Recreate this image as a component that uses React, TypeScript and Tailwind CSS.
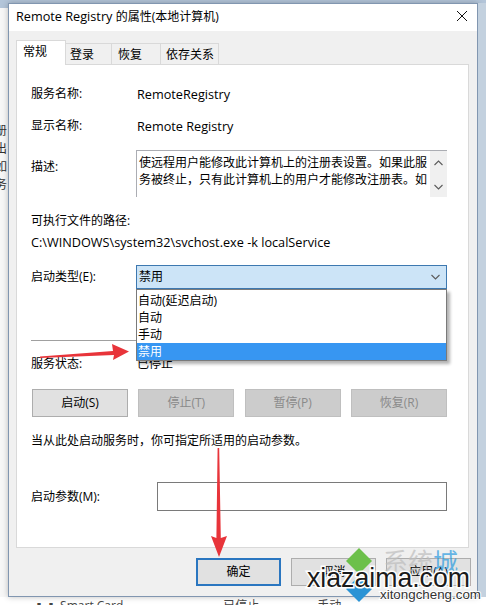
import React from "react";

const font = "font-['Open_Sans','Noto_Sans_CJK_SC',sans-serif]";

const Label = ({ children, w = "w-[105px]" }: { children: React.ReactNode; w?: string }) => (
  <div className={`${w} shrink-0 leading-[16px]`}>{children}</div>
);

const Chevron = ({ up = false }: { up?: boolean }) => (
  <svg width="9" height="6" viewBox="0 0 9 6" className="block">
    <path
      d={up ? "M0.5 5 L4.5 1 L8.5 5" : "M0.5 1 L4.5 5 L8.5 1"}
      fill="none"
      stroke="#5a5a5a"
      strokeWidth="1.1"
    />
  </svg>
);

const ServiceButton = ({ label, disabled }: { label: string; disabled?: boolean }) => (
  <div
    className={`w-[96px] h-[28px] flex items-center justify-center border ${
      disabled
        ? "bg-[#cccccc] border-[#bfbfbf] text-[#8a8a8a]"
        : "bg-[#e1e1e1] border-[#adadad] text-black"
    }`}
  >
    {label}
  </div>
);

const GeneralTab = () => {
  return (
    <div className="h-[484px] border border-[#d9d9d9] bg-white pl-[14px] pr-[21px] pt-[21px]">
      <div className="flex">
        <Label>服务名称:</Label>
        <div className="leading-[16px] pl-[1px] text-[12.7px]">RemoteRegistry</div>
      </div>
      <div className="flex mt-[16px]">
        <Label>显示名称:</Label>
        <div className="leading-[16px] pl-[1px] text-[12.7px]">Remote Registry</div>
      </div>

      {/* 描述 */}
      <div className="flex mt-[16px] h-[47px]">
        <div className="w-[105px] shrink-0 leading-[16px] pt-[9px]">描述:</div>
        <div className="flex flex-1 border-t border-l border-[#abadb3]">
          <div className="flex-1 pl-[2px] pt-[3px] leading-[17px] whitespace-nowrap overflow-hidden">
            <div>使远程用户能修改此计算机上的注册表设置。如果此服</div>
            <div>务被终止，只有此计算机上的用户才能修改注册表。如</div>
          </div>
          <div className="w-[17px] bg-[#f0f0f0] flex flex-col items-center justify-between pt-[9px] pb-[7px]">
            <Chevron up />
            <Chevron />
          </div>
        </div>
      </div>

      <div className="mt-[16px] leading-[16px]">可执行文件的路径:</div>
      <div className="mt-[5px] leading-[16px] text-[12.7px]">C:\WINDOWS\system32\svchost.exe -k localService</div>

      {/* 启动类型 */}
      <div className="flex items-center mt-[15px] h-[24px]">
        <Label>启动类型(E):</Label>
        <div className="relative flex-1 h-[24px]">
          <div className="h-full flex items-center justify-between border border-[#3d78b0] bg-[#cce4f7] pl-[2px] pr-[6px]">
            <span className="leading-[16px]">禁用</span>
            <Chevron />
          </div>
          <div className="absolute left-0 right-0 top-[24px] z-10 bg-white border border-[#7a7a7a] shadow-[3px_3px_3px_rgba(0,0,0,0.3)] pt-[2px] leading-[17px]">
            <div className="h-[17px] pl-[1px]">自动(延迟启动)</div>
            <div className="h-[17px] pl-[1px]">自动</div>
            <div className="h-[17px] pl-[1px]">手动</div>
            <div className="h-[17px] pl-[1px] bg-[#3796f2] text-white">禁用</div>
          </div>
        </div>
      </div>

      <div className="mt-[51px] border-t border-[#a0a0a0]" />

      <div className="flex mt-[15px]">
        <Label>服务状态:</Label>
        <div className="leading-[16px] pl-[1px]">已停止</div>
      </div>

      <div className="flex justify-between mt-[17px] pl-[1px]">
        <ServiceButton label="启动(S)" />
        <ServiceButton label="停止(T)" disabled />
        <ServiceButton label="暂停(P)" disabled />
        <ServiceButton label="恢复(R)" disabled />
      </div>

      <div className="mt-[16px] leading-[16px]">当从此处启动服务时，你可指定所适用的启动参数。</div>

      <div className="flex items-center mt-[33px]">
        <Label w="w-[126px]">启动参数(M):</Label>
        <div className="flex-1 h-[29px] border border-[#7a7a7a] bg-white" />
      </div>
    </div>
  );
};

const App = () => {
  return (
    <div className={`relative w-[486px] h-[605px] overflow-hidden bg-white text-[12px] text-black ${font}`}>
      <div className="h-[3px] bg-[#b3c5d9]" />
      <div className="flex h-[594px]">
        {/* desktop window behind, left edge */}
        <div className="w-[8px] shrink-0 overflow-hidden bg-[#f7f7f7] text-[#333]">
          <div className="h-[5px] bg-[#b3c5d9]" />
          <div className="ml-[-5px] mt-[114px] leading-[18px]">
            <div>册</div>
            <div>出</div>
            <div>如</div>
            <div>务</div>
          </div>
        </div>

        {/* dialog */}
        <div className="w-[470px] shrink-0 border border-[#8196b0] bg-[#f0f0f0] flex flex-col shadow-[0_0_6px_rgba(0,0,0,0.25)]">
          <div className="h-[27px] bg-white flex justify-between pl-[7px] pr-[9px] pt-[4px]">
            <div className="leading-[16px]">
              <span className="text-[12.7px]">Remote Registry </span>的属性(本地计算机)
            </div>
            <svg width="12" height="12" viewBox="0 0 12 12" className="mt-[2px]">
              <path d="M1 1 L11 11 M11 1 L1 11" stroke="#111" strokeWidth="1" />
            </svg>
          </div>

          <div className="pt-[9px] pl-[7px] pr-[8px]">
            <div className="flex items-end h-[24px]">
              <div className="relative z-10 w-[50px] h-[25px] mb-[-1px] bg-white border-l border-t border-r border-[#d9d9d9] pl-[6px] pt-[3px] leading-[16px]">
                常规
              </div>
              <div className="w-[46px] h-[21px] border-t border-r border-[#d9d9d9] pl-[4px] pt-[3px] leading-[16px]">
                登录
              </div>
              <div className="w-[49px] h-[21px] border-t border-r border-[#d9d9d9] pl-[6px] pt-[3px] leading-[16px]">
                恢复
              </div>
              <div className="w-[58px] h-[21px] border-t border-r border-[#d9d9d9] pl-[5px] pt-[3px] leading-[16px]">
                依存关系
              </div>
            </div>
            <GeneralTab />
          </div>

          <div className="flex justify-end gap-[10px] pr-[6px] mt-[10px]">
            <div className="w-[85px] h-[28px] flex items-center justify-center border-2 border-[#2a76c0] bg-[#e1e1e1]">
              确定
            </div>
            <div className="w-[85px] h-[28px] flex items-center justify-center border border-[#adadad] bg-[#e1e1e1]">
              取消
            </div>
            <div className="w-[85px] h-[28px] flex items-center justify-center border border-[#adadad] bg-[#e1e1e1]">
              应用(A)
            </div>
          </div>
        </div>

        <div className="w-[8px] shrink-0 bg-[#c3d1df]" />
      </div>

      {/* window list behind, bottom edge */}
      <div className="h-[8px] overflow-hidden flex text-[#444] leading-[16px] pt-[1px]">
        <span className="ml-[33px]">▪▪ Smart Card</span>
        <span className="ml-[100px]">已停止</span>
        <span className="ml-[58px]">手动</span>
      </div>

      {/* red arrows */}
      <svg className="absolute inset-0 pointer-events-none" width="486" height="605" viewBox="0 0 486 605">
        <polygon
          points="40,356.4 113,351 112,344 129,351.5 113,360 114,355 40,358"
          fill="#e8343a"
        />
        <polygon
          points="217.6,448 219.2,448 220.8,538 227,536 219,557 211,536 216.4,538"
          fill="#e8343a"
        />
      </svg>

      {/* watermark */}
      <div className="absolute left-[383px] top-[545px] text-[25px] leading-[30px] font-['Noto_Sans_CJK_SC',sans-serif] opacity-70">
        <span className="text-[#bdbdbd]">系统</span>
        <span className="text-[#2a9be0]">城</span>
      </div>
      <svg className="absolute inset-0 pointer-events-none" width="486" height="605" viewBox="0 0 486 605">
        <polygon points="359,548 372,561 359,574 346,561" fill="#6cc04a" />
        <polygon points="359,576 372,589 359,602 346,589" fill="#2a93d5" />
        <text
          x="307"
          y="587"
          fontSize="28"
          fontFamily="Liberation Sans, sans-serif"
          textLength="163"
          lengthAdjust="spacingAndGlyphs"
          fill="#1a1a1a"
          stroke="#ffffff"
          strokeWidth="3"
          paintOrder="stroke"
        >
          xiazaima.com
        </text>
        <text
          x="380"
          y="599"
          fontSize="13"
          fontFamily="Liberation Sans, sans-serif"
          textLength="101"
          lengthAdjust="spacingAndGlyphs"
          fill="#333333"
          stroke="#ffffff"
          strokeWidth="2"
          paintOrder="stroke"
        >
          xitongcheng.com
        </text>
      </svg>
    </div>
  );
};

export default App;
